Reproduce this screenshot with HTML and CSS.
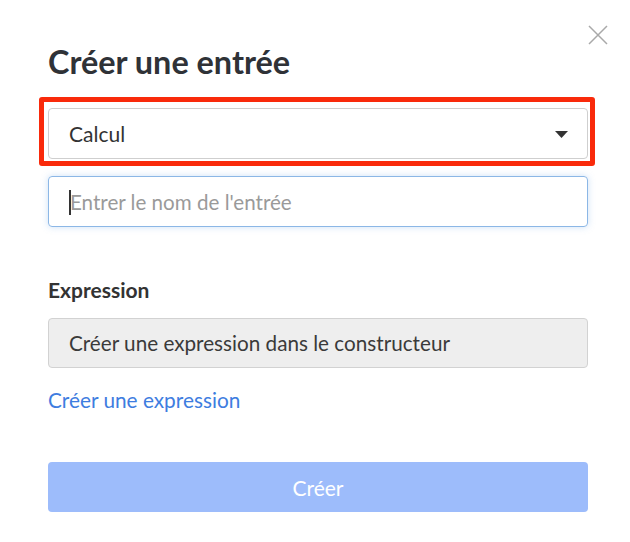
FILE: index.html
```html
<!DOCTYPE html>
<html lang="fr">
<head>
<meta charset="utf-8">
<title>Créer une entrée</title>
<link rel="stylesheet" href="styles.css">
</head>
<body>
<div class="dialog">
  <button class="close" aria-label="Fermer">
    <svg width="20" height="20" viewBox="0 0 20 20"><path d="M1 1L19 19M19 1L1 19" stroke="#a9a9a9" stroke-width="1.5" fill="none"/></svg>
  </button>
  <h1 class="title">Créer une entrée</h1>
  <div class="select-wrap">
    <div class="select">
      <span class="select-value">Calcul</span>
      <svg class="arrow" width="13" height="7" viewBox="0 0 13 7"><path d="M0 0H13L6.5 7Z" fill="#333"/></svg>
    </div>
    <div class="highlight"></div>
  </div>
  <div class="input focused"><span class="caret"></span><span class="placeholder">Entrer le nom de l'entrée</span></div>
  <div class="label">Expression</div>
  <div class="readonly">Créer une expression dans le constructeur</div>
  <a class="link" href="#">Créer une expression</a>
  <button class="submit">Créer</button>
</div>
</body>
</html>
```
FILE: styles.css
```css
html, body {
  margin: 0;
  padding: 0;
  background: #fff;
}
body {
  font-family: Lato, "Open Sans", sans-serif;
  color: #333;
}
.dialog {
  position: relative;
  width: 540px;
  padding: 42px 0 0 48px;
  display: flex;
  flex-direction: column;
}
.close {
  position: absolute;
  left: 588px;
  top: 25px;
  width: 20px;
  height: 20px;
  padding: 0;
  border: 0;
  background: none;
  display: block;
}
.close svg { display: block; }
.title {
  margin: 0;
  font-size: 32.4px;
  line-height: 40px;
  font-weight: 700;
  color: #2f3237;
}
.select-wrap {
  position: relative;
  margin-top: 26px;
}
.select {
  height: 51px;
  box-sizing: border-box;
  border: 1px solid #cfcfcf;
  border-radius: 4px;
  padding: 0 19px 0 20px;
  display: flex;
  align-items: center;
  justify-content: space-between;
  font-size: 21px;
  color: #333;
}
.arrow { display: block; margin-top: 2px; }
.highlight {
  position: absolute;
  left: -9px;
  top: -11px;
  right: -7px;
  bottom: -7px;
  border: 5px solid #f92a0b;
  border-radius: 3px;
}
.input {
  margin-top: 17px;
  height: 51px;
  box-sizing: border-box;
  border: 1px solid #8cb7e6;
  border-radius: 4px;
  box-shadow: 0 0 7px rgba(110, 165, 230, 0.35);
  padding: 0 20px;
  display: flex;
  align-items: center;
  font-size: 20.6px;
}
.caret {
  width: 2px;
  height: 25px;
  background: #333;
  margin-right: -1px;
  margin-top: 1px;
}
.placeholder {
  color: #9a9a9a;
}
.label {
  margin-top: 51px;
  font-size: 21px;
  line-height: 24px;
  font-weight: 700;
  color: #333;
}
.readonly {
  margin-top: 16px;
  height: 50px;
  box-sizing: border-box;
  background: #eeeeee;
  border: 1px solid #d2d2d2;
  border-radius: 4px;
  padding: 0 20px;
  display: flex;
  align-items: center;
  font-size: 20.7px;
  color: #3a3a3a;
}
.link {
  margin-top: 20px;
  align-self: flex-start;
  font-size: 20.8px;
  line-height: 24px;
  color: #3e7de0;
  text-decoration: none;
}
.submit {
  margin-top: 50px;
  height: 50px;
  border: 0;
  border-radius: 4px;
  background: #9dbcfb;
  color: #fff;
  font-family: Lato, "Open Sans", sans-serif;
  font-size: 21px;
  padding: 0;
}
```
